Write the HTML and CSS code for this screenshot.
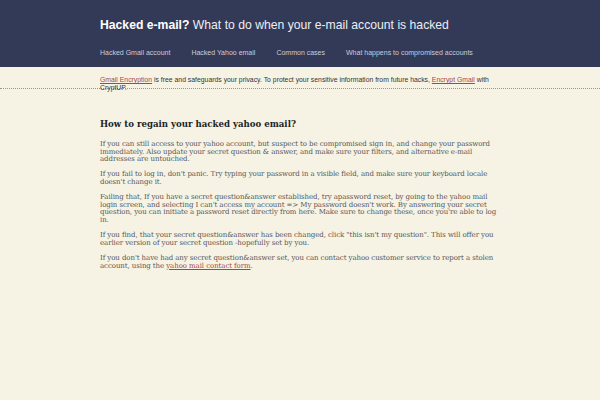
FILE: index.html
```html
<!DOCTYPE html>
<html lang="en">
<head>
<meta charset="utf-8">
<title>Hacked e-mail? What to do when your e-mail account is hacked</title>
<link rel="stylesheet" href="styles.css">
</head>
<body>
<header class="masthead">
  <div class="wrap">
    <h1 class="site-title"><strong>Hacked e-mail?</strong> What to do when your e-mail account is hacked</h1>
    <nav class="nav">
      <a href="#">Hacked Gmail account</a>
      <a href="#">Hacked Yahoo email</a>
      <a href="#">Common cases</a>
      <a href="#">What happens to compromised accounts</a>
    </nav>
  </div>
</header>
<div class="promo">
  <div class="wrap">
    <p><a href="#">Gmail Encryption</a> is free and safeguards your privacy. To protect your sensitive information from future hacks, <a href="#">Encrypt Gmail</a> with CryptUP.</p>
  </div>
</div>
<main class="wrap content">
  <h2>How to regain your hacked yahoo email?</h2>
  <p>If you can still access to your yahoo account, but suspect to be compromised sign in, and change your password immediately. Also update your secret question &amp; answer, and make sure your filters, and alternative e-mail addresses are untouched.</p>
  <p>If you fail to log in, don't panic. Try typing your password in a visible field, and make sure your keyboard locale doesn't change it.</p>
  <p>Failing that, If you have a secret question&amp;answer established, try apassword reset, by going to the yahoo mail login screen, and selecting I can't access my account =&gt; My password doesn't work. By answering your secret question, you can initiate a password reset directly from here. Make sure to change these, once you're able to log in.</p>
  <p>If you find, that your secret question&amp;answer has been changed, click "this isn't my question". This will offer you earlier version of your secret question -hopefully set by you.</p>
  <p>If you don't have had any secret question&amp;answer set, you can contact yahoo customer service to report a stolen account, using the <a href="#">yahoo mail contact form</a>.</p>
</main>
</body>
</html>
```

FILE: styles.css
```css
html, body {
  margin: 0;
  padding: 0;
}
body {
  background: #f6f3e5;
  font-family: "Liberation Sans", Arial, sans-serif;
  color: #333;
}
.wrap {
  width: 400px;
  margin: 0 auto;
}
.masthead {
  background: #333a58;
  padding: 18px 0 10px;
}
.site-title {
  margin: 0;
  font-size: 12.2px;
  line-height: 14px;
  font-weight: normal;
  color: #eceef3;
  white-space: nowrap;
}
.site-title strong {
  font-weight: bold;
  color: #fff;
}
.nav {
  display: flex;
  gap: 21px;
  margin-top: 16px;
  font-size: 7px;
  line-height: 9px;
}
.nav a {
  color: #c9ccd8;
  text-decoration: none;
}
.promo {
  height: 12px;
  padding-top: 9px;
  border-bottom: 1px dotted #9a988c;
}
.promo p {
  margin: 0;
  font-size: 6.85px;
  line-height: 7.7px;
  color: #333;
}
.promo a {
  color: #a9473f;
}
.content {
  padding-top: 29px;
  font-family: "DejaVu Serif", serif;
}
.content h2 {
  margin: 0 0 11px;
  font-size: 8.6px;
  line-height: 12px;
  font-weight: bold;
  color: #222;
}
.content p {
  margin: 0 0 7.6px;
  font-size: 7px;
  letter-spacing: -0.08px;
  line-height: 7.6px;
  color: #555;
}
.content a {
  color: #a9473f;
}
```
